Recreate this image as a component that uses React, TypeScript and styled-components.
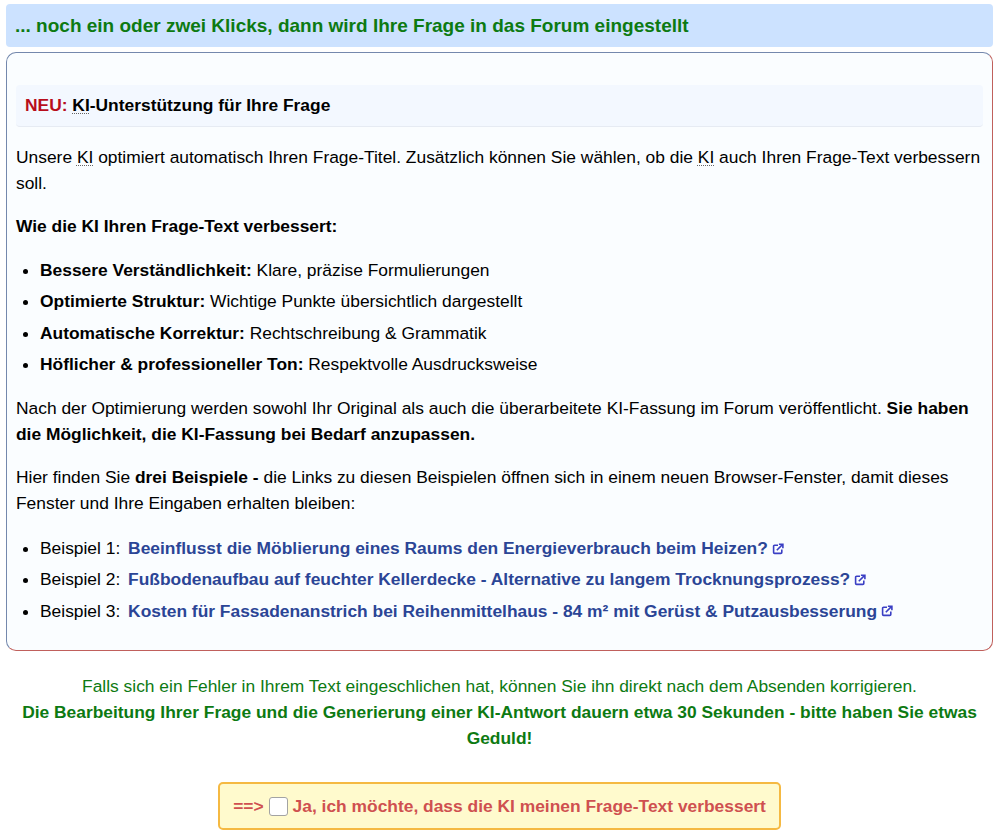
import React from "react";
import styled, { createGlobalStyle } from "styled-components";

const Global = createGlobalStyle`
  html, body { margin: 0; padding: 0; background: #fff; }
  body { font-family: "Liberation Sans", Arial, sans-serif; font-size: 17.4px; color: #000; }
`;

const Page = styled.div`
  padding: 4px 7px 0 6px;
  height: 834px;
  overflow: hidden;
`;

const Banner = styled.div`
  background: #cce2ff;
  border-radius: 4px;
  height: 43px;
  padding: 0 9px;
  display: flex;
  align-items: center;
  color: #0d7a12;
  font-size: 19px;
  font-weight: bold;
  margin-bottom: 5px;
`;

const Card = styled.div`
  background: #fafdff;
  border: 1px solid;
  border-color: #7488ad #c0605c #c0605c #7488ad;
  border-radius: 10px;
  padding: 32px 9px 16px 9px;
  height: 599px;
  box-sizing: border-box;
  line-height: 26px;
`;

const Heading = styled.div`
  background: #f3f8ff;
  border-bottom: 1px solid #e6ebf3;
  border-radius: 4px;
  height: 42px;
  padding: 0 9px 2px;
  box-sizing: border-box;
  display: flex;
  align-items: center;
  font-size: 17.4px;
  font-weight: bold;
  margin-bottom: 17px;
  white-space: pre;
`;

const New = styled.span`
  color: #b80d1c;
`;

const Abbr = styled.abbr`
  text-decoration: underline dotted #666 1px;
  text-underline-offset: 2px;
  cursor: help;
`;

const Para = styled.p`
  margin: 0 0 17px;
`;

const List = styled.ul<{ $shift?: number }>`
  margin: ${(p) => -0.9 + (p.$shift ?? 0)}px 0 14.7px;
  padding: 0 0 0 24px;
`;

const Item = styled.li`
  height: 31.3px;
  line-height: 31.3px;
  white-space: nowrap;
`;

const Example = styled.a`
  color: #2b4596;
  font-weight: bold;
  text-decoration: none;
  margin-left: 3px;
  display: inline-flex;
  align-items: center;
  gap: 4px;
`;

const Notice = styled.div`
  margin-top: 22px;
  text-align: center;
  color: #0d7a12;
  line-height: 26px;
  padding: 0 8px;
`;

const Confirm = styled.label`
  display: flex;
  width: fit-content;
  box-sizing: border-box;
  height: 48px;
  margin: 31px auto 0;
  padding: 0 13px;
  align-items: center;
  gap: 5px;
  background: #fffacd;
  border: 2px solid #f5b942;
  border-radius: 5px;
  color: #cf5050;
  font-weight: bold;
  white-space: nowrap;
`;

const Box = styled.span`
  width: 19px;
  height: 19px;
  box-sizing: border-box;
  background: #fff;
  border: 1px solid #a3a3a3;
  border-radius: 3px;
`;

const External = () => (
  <svg width="12" height="12" viewBox="0 0 12 12" fill="none" stroke="#3a3fc4" strokeWidth="1.6">
    <path d="M6 2.2H2.6a1 1 0 0 0-1 1v6.2a1 1 0 0 0 1 1h6.2a1 1 0 0 0 1-1V6.4" />
    <path d="M4.8 7.2 10.4 1.6M6.9 1.2h4v4" />
  </svg>
);

const examples = [
  "Beeinflusst die Möblierung eines Raums den Energieverbrauch beim Heizen?",
  "Fußbodenaufbau auf feuchter Kellerdecke - Alternative zu langem Trocknungsprozess?",
  "Kosten für Fassadenanstrich bei Reihenmittelhaus - 84 m² mit Gerüst & Putzausbesserung",
];

export default function App() {
  return (
    <Page>
      <Global />
      <Banner>... noch ein oder zwei Klicks, dann wird Ihre Frage in das Forum eingestellt</Banner>
      <Card>
        <Heading>
          <New>NEU: </New>
          <Abbr>KI</Abbr>-Unterstützung für Ihre Frage
        </Heading>
        <Para>
          Unsere <Abbr>KI</Abbr> optimiert automatisch Ihren Frage-Titel. Zusätzlich können Sie wählen, ob die <Abbr>KI</Abbr> auch Ihren Frage-Text verbessern soll.
        </Para>
        <Para>
          <b>Wie die KI Ihren Frage-Text verbessert:</b>
        </Para>
        <List>
          <Item><b>Bessere Verständlichkeit:</b> Klare, präzise Formulierungen</Item>
          <Item><b>Optimierte Struktur:</b> Wichtige Punkte übersichtlich dargestellt</Item>
          <Item><b>Automatische Korrektur:</b> Rechtschreibung &amp; Grammatik</Item>
          <Item><b>Höflicher &amp; professioneller Ton:</b> Respektvolle Ausdrucksweise</Item>
        </List>
        <Para>
          Nach der Optimierung werden sowohl Ihr Original als auch die überarbeitete KI-Fassung im Forum veröffentlicht. <b>Sie haben die Möglichkeit, die KI-Fassung bei Bedarf anzupassen.</b>
        </Para>
        <Para>
          Hier finden Sie <b>drei Beispiele -</b> die Links zu diesen Beispielen öffnen sich in einem neuen Browser-Fenster, damit dieses Fenster und Ihre Eingaben erhalten bleiben:
        </Para>
        <List $shift={1}>
          {examples.map((t, i) => (
            <Item key={t}>
              Beispiel {i + 1}: <Example href="#">{t}<External /></Example>
            </Item>
          ))}
        </List>
      </Card>
      <Notice>
        Falls sich ein Fehler in Ihrem Text eingeschlichen hat, können Sie ihn direkt nach dem Absenden korrigieren.
        <br />
        <b>Die Bearbeitung Ihrer Frage und die Generierung einer KI-Antwort dauern etwa 30 Sekunden - bitte haben Sie etwas Geduld!</b>
      </Notice>
      <Confirm>
        ==&gt; <Box /> Ja, ich möchte, dass die KI meinen Frage-Text verbessert
      </Confirm>
    </Page>
  );
}
